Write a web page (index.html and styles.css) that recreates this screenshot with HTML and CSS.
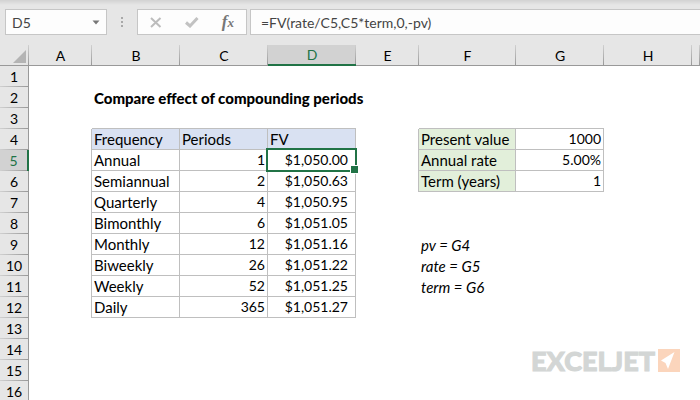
FILE: index.html
```html
<!DOCTYPE html>
<html lang="en">
<head>
    <meta charset="UTF-8">
    <meta name="viewport" content="width=device-width, initial-scale=1.0">
    <title>Compare effect of compounding periods</title>
    <link rel="stylesheet" href="styles.css">
</head>
<body>
    <!-- Formula bar -->
    <div class="formula-bar">
        <div class="name-box">
            <input type="text" class="name-input" value="D5" aria-label="Name box">
            <button type="button" class="name-arrow" aria-label="Show names">
                <svg width="8" height="5" viewBox="0 0 8 5"><path d="M0.5 0.5h7L4 4.5z" fill="#777"/></svg>
            </button>
        </div>
        <svg class="grip" width="2" height="10" viewBox="0 0 2 10" fill="#a8a8a8">
            <path d="M0 0h2v2H0zM0 4h2v2H0zM0 8h2v2H0z"/>
        </svg>
        <div class="actions">
            <button type="button" aria-label="Cancel">
                <svg width="12" height="11" viewBox="0 0 12 11"><path d="M1 1l9.5 9M10.5 1L1 10" fill="none" stroke="#bcbcbc" stroke-width="2"/></svg>
            </button>
            <button type="button" aria-label="Enter">
                <svg width="14" height="11" viewBox="0 0 14 11"><path d="M1 5.500l4 3.500L12.500 1" fill="none" stroke="#c2c2c2" stroke-width="3"/></svg>
            </button>
            <button type="button" class="fx" aria-label="Insert function"><i>f</i><i class="fx-x">x</i></button>
        </div>
        <input type="text" class="formula-input" value="=FV(rate/C5,C5*term,0,-pv)" aria-label="Formula">
    </div>

    <!-- Sheet -->
    <table class="sheet">
        <colgroup>
            <col class="col-head">
            <col class="col-narrow">
            <col class="col">
            <col class="col">
            <col class="col">
            <col class="col-narrow">
            <col class="col-wide">
            <col class="col">
            <col class="col">
            <col>
        </colgroup>
        <thead>
            <tr>
                <th class="corner"><svg width="13" height="13" viewBox="0 0 13 13"><path d="M13 0v13H0z" fill="#b4b4b4"/></svg></th>
                <th>A</th>
                <th>B</th>
                <th>C</th>
                <th class="active">D</th>
                <th>E</th>
                <th>F</th>
                <th>G</th>
                <th>H</th>
                <th></th>
            </tr>
        </thead>
        <tbody>
            <tr><th>1</th><td colspan="9"></td></tr>
            <tr><th>2</th><td></td><td colspan="8" class="title">Compare effect of compounding periods</td></tr>
            <tr><th>3</th><td></td><td colspan="3" class="edge-bottom"></td><td></td><td colspan="2" class="edge-bottom"></td><td colspan="2"></td></tr>
            <tr>
                <th>4</th><td class="edge-right"></td>
                <td class="cell blue">Frequency</td><td class="cell blue">Periods</td><td class="cell blue">FV</td>
                <td class="edge-right"></td><td class="cell green">Present value</td><td class="cell num">1000</td><td colspan="2"></td>
            </tr>
            <tr>
                <th class="active">5</th><td class="edge-right"></td>
                <td class="cell">Annual</td><td class="cell num">1</td><td class="cell money selected">$1,050.00</td>
                <td class="edge-right"></td><td class="cell green">Annual rate</td><td class="cell num">5.00%</td><td colspan="2"></td>
            </tr>
            <tr>
                <th>6</th><td class="edge-right"></td>
                <td class="cell">Semiannual</td><td class="cell num">2</td><td class="cell money">$1,050.63</td>
                <td class="edge-right"></td><td class="cell green">Term (years)</td><td class="cell num">1</td><td colspan="2"></td>
            </tr>
            <tr>
                <th>7</th><td class="edge-right"></td>
                <td class="cell">Quarterly</td><td class="cell num">4</td><td class="cell money">$1,050.95</td><td colspan="5"></td>
            </tr>
            <tr>
                <th>8</th><td class="edge-right"></td>
                <td class="cell">Bimonthly</td><td class="cell num">6</td><td class="cell money">$1,051.05</td><td colspan="5"></td>
            </tr>
            <tr>
                <th>9</th><td class="edge-right"></td>
                <td class="cell">Monthly</td><td class="cell num">12</td><td class="cell money">$1,051.16</td>
                <td></td><td colspan="4" class="note">pv = G4</td>
            </tr>
            <tr>
                <th>10</th><td class="edge-right"></td>
                <td class="cell">Biweekly</td><td class="cell num">26</td><td class="cell money">$1,051.22</td>
                <td></td><td colspan="4" class="note">rate = G5</td>
            </tr>
            <tr>
                <th>11</th><td class="edge-right"></td>
                <td class="cell">Weekly</td><td class="cell num">52</td><td class="cell money">$1,051.25</td>
                <td></td><td colspan="4" class="note">term = G6</td>
            </tr>
            <tr>
                <th>12</th><td class="edge-right"></td>
                <td class="cell">Daily</td><td class="cell num">365</td><td class="cell money">$1,051.27</td><td colspan="5"></td>
            </tr>
            <tr><th>13</th><td colspan="9"></td></tr>
            <tr><th>14</th><td colspan="9"></td></tr>
            <tr><th>15</th><td colspan="9"></td></tr>
            <tr><th>16</th><td colspan="9"></td></tr>
        </tbody>
    </table>

    <!-- Watermark -->
    <div class="logo">
        <span>EXCELJET</span>
        <svg width="22" height="23" viewBox="0 0 22 23"><path d="M0 0h22v23H0z" fill="#fbd5bc"/><path d="M16.500 3L3 11.500l4.500 2.500 2.500 6z" fill="#fff"/></svg>
    </div>
</body>
</html>
```

FILE: styles.css
```css
* {
    box-sizing: border-box;
}

body {
    margin: 0;
    height: 100vh;
    overflow: hidden;
    position: relative;
    background-color: #fff;
    color: #000;
    font-family: Lato, sans-serif;
    font-size: 14px;
}

input, button {
    border: none;
    background: none;
    padding: 0;
    margin: 0;
    font-family: inherit;
    font-size: 14px;
    color: #444;
    outline: none;
}

/* Formula bar */
.formula-bar {
    display: flex;
    align-items: center;
    height: 45px;
    padding: 9px 0 10px 5px;
    background: linear-gradient(#d2d2d2, #e6e6e6 5px);
}

.name-box, .actions, .formula-input {
    height: 26px;
    border: 1px solid #c6c6c6;
    background-color: #fdfdfd;
}

.name-box {
    display: flex;
    width: 102px;
}

.name-input {
    flex: 1;
    min-width: 0;
    padding-left: 6px;
}

.name-arrow {
    display: flex;
    align-items: center;
    padding: 0 6px;
}

.grip {
    margin: 0 14px;
}

.actions {
    display: flex;
    align-items: center;
    justify-content: space-between;
    width: 110px;
    padding: 0 12px;
}

.actions button {
    display: flex;
    align-items: center;
}

.actions .fx {
    align-items: baseline;
    font-family: "Liberation Serif", serif;
    font-size: 17px;
    font-weight: bold;
    line-height: 20px;
    color: #777;
}

.fx-x {
    font-size: 13px;
}

.formula-input {
    flex: 1;
    min-width: 0;
    margin-left: 3px;
    padding-left: 10px;
    border-right: none;
}

/* Sheet */
.sheet {
    width: 100%;
    table-layout: fixed;
    border-collapse: separate;
    border-spacing: 0;
}

.col-head {
    width: 29px;
}

.col {
    width: 88px;
}

.col-narrow {
    width: 63px;
}

.col-wide {
    width: 97px;
}

th, td {
    height: 21px;
    padding: 0;
    line-height: 20px;
    white-space: nowrap;
}

th {
    font-weight: normal;
    background-color: #e6e6e6;
}

thead th {
    border-bottom: 1px solid #999;
    background: linear-gradient(#d0d0d0, #999) right / 1px 100% no-repeat #e6e6e6;
    line-height: 19px;
}

thead th.active {
    border-bottom: 2px solid #217346;
    background-color: #d2d2d2;
    color: #217346;
}

tbody th {
    border-right: 1px solid #999;
    background: linear-gradient(to right, #d0d0d0, #999) bottom / 100% 1px no-repeat #e6e6e6;
}

tbody th.active {
    border-right: 2px solid #217346;
    background-color: #d2d2d2;
    color: #217346;
}

thead .corner {
    padding: 2px 3px 0 0;
}

.corner svg {
    display: block;
    margin-left: auto;
}

.title {
    padding-left: 2px;
    font-size: 15px;
    font-weight: 900;
}

.note {
    padding-left: 2px;
    font-size: 15px;
    font-style: italic;
}

.cell {
    padding: 0 2px;
    border-right: 1px solid #bfbfbf;
    border-bottom: 1px solid #bfbfbf;
    font-size: 15px;
}

.edge-right {
    border-right: 1px solid #bfbfbf;
}

.edge-bottom {
    border-bottom: 1px solid #bfbfbf;
}

.blue {
    background-color: #d9e1f2;
}

.green {
    background-color: #e2efda;
}

.num, .money {
    font-size: 14px;
    text-align: right;
}

.money {
    padding-right: 7px;
}

/* Selection frame and fill handle */
.selected {
    position: relative;
}

.selected::before {
    content: "";
    position: absolute;
    inset: -2px;
    border: 2px solid #217346;
}

.selected::after {
    content: "";
    position: absolute;
    right: -4px;
    bottom: -4px;
    width: 7px;
    height: 7px;
    border: 1px solid #fff;
    background-color: #217346;
}

/* Watermark */
.logo {
    position: absolute;
    right: 20px;
    bottom: 28px;
    display: flex;
    align-items: center;
    gap: 3px;
    height: 23px;
    font-size: 27px;
    font-weight: 900;
    line-height: 23px;
    color: #d3d6d5;
    -webkit-text-stroke: 1px #d3d6d5;
}
```
